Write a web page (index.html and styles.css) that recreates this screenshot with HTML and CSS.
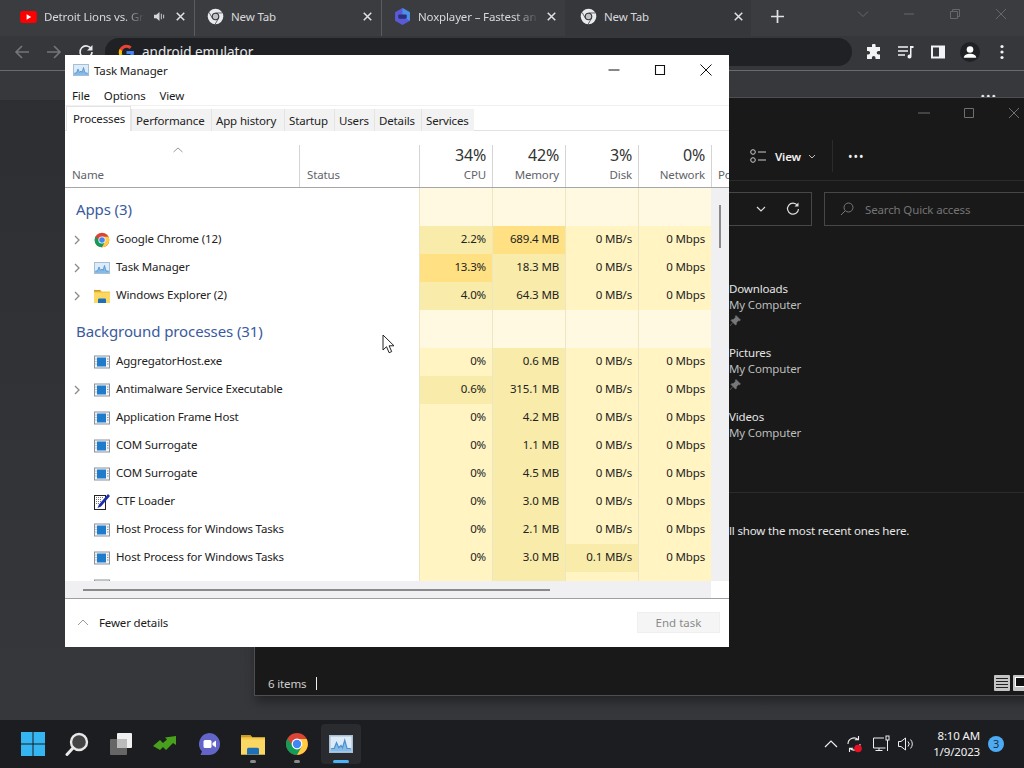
FILE: index.html
```html
<!DOCTYPE html>
<html lang="en">
<head>
    <meta charset="UTF-8">
    <title>Task Manager</title>
    <link rel="stylesheet" href="styles.css">
</head>
<body>

<svg class="sprite" width="0" height="0">
    <symbol id="i-chrome" viewBox="0 0 24 24">
        <circle cx="12" cy="12" r="11" fill="#db4437"/>
        <path d="M2.5 6.5A11 11 0 0 0 12 23l5.5-9.5H7.5z" fill="#0f9d58"/>
        <path d="M12 7h9.6A11 11 0 0 1 12 23l5-9z" fill="#ffcd40"/>
        <circle cx="12" cy="12" r="5.4" fill="#fff"/>
        <circle cx="12" cy="12" r="4.2" fill="#4285f4"/>
    </symbol>
    <symbol id="i-chrome-grey" viewBox="0 0 24 24">
        <circle cx="12" cy="12" r="11" fill="#e8eaed"/>
        <path d="M12 7h9.6M7.7 14.5 2.9 6.2M16.3 14.5 11.5 22.8" stroke="#5f6368" stroke-width="1.4"/>
        <circle cx="12" cy="12" r="5.4" fill="#35363a"/>
        <circle cx="12" cy="12" r="3.8" fill="#bdc1c6"/>
    </symbol>
    <symbol id="i-app" viewBox="0 0 16 16">
        <rect x=".5" y="2" width="15" height="12" fill="#f2f4f6" stroke="#8b949c"/>
        <rect x="3" y="3.500" width="9" height="9" fill="#1f7bcb"/>
        <path d="M13 5h1.500M13 7.500h1.500M13 10h1.500M1.500 5H2.500M1.500 7.500H2.500M1.500 10H2.500" stroke="#8b949c"/>
    </symbol>
    <symbol id="i-taskmgr" viewBox="0 0 16 16">
        <rect x=".5" y="2.500" width="15" height="11" fill="#dcebf7" stroke="#a6bfd4"/>
        <path d="M1 13v-2h2.500l1.500-4 1.500 3.500L8 9l1 1.500 1.500-5L12 11h3v2z" fill="#86bbe8"/>
        <path d="M1.500 11h2l1.500-4 1.500 3.500L8 9l1 1.500 1.500-5L12 11h2.500" fill="none" stroke="#4a8fd0" stroke-width=".8"/>
    </symbol>
    <symbol id="i-folder" viewBox="0 0 16 16">
        <path d="M0 2h6l1.500 1.500H16V15H0z" fill="#f7c948"/>
        <path d="M0 2h6l1.500 1.500H0z" fill="#c99a25"/>
        <rect x="0" y="5" width="16" height="10" fill="#fbd764"/>
        <path d="M4 15v-3.500q0-1 1-1h6q1 0 1 1V15z" fill="#1d6fb8"/>
    </symbol>
    <symbol id="i-ctf" viewBox="0 0 16 16">
        <rect x=".5" y="1.500" width="11" height="14" fill="#fff" stroke="#222"/>
        <path d="M2 3.500h8M2 5.500h6M2 7.500h5M2 9.500h3" stroke="#777" stroke-dasharray="1 1"/>
        <path d="M14 0 16 2 7 12.500 3.500 14 5 10.500z" fill="#1c2fa8"/>
    </symbol>
    <symbol id="i-chev-r" viewBox="0 0 8 10">
        <path d="M2 1l4 4-4 4" fill="none" stroke="#8a8a8a" stroke-width="1.300"/>
    </symbol>
    <symbol id="i-x" viewBox="0 0 12 12">
        <path d="M1 1l10 10M11 1 1 11" fill="none" stroke="currentColor"/>
    </symbol>
    <symbol id="i-pin" viewBox="0 0 12 12">
        <path d="M7 .5l4.500 4.500-1 .8-.8-.3L7.500 7.600 7.300 9.500 6.500 10 2 5.500l.6-.8 1.900-.2L6.600 2.300l-.3-.8zM3.800 7.600 1 11" fill="#77787a" stroke="#77787a" stroke-width=".6"/>
    </symbol>
</svg>

<!-- browser behind everything -->
<div class="chrome">
    <div class="tabstrip">
        <div class="tab tab-yt">
            <svg class="favicon" viewBox="0 0 18 13"><rect width="18" height="13" rx="3" fill="#f00"/><path d="M7 3.500 12 6.500 7 9.500z" fill="#fff"/></svg>
            <span class="tab-title fade">Detroit Lions vs. Gr</span>
            <svg class="tab-sound" viewBox="0 0 12 12"><path d="M0 4h2.500L6 1v10L2.500 8H0z" fill="#d6d7d9"/><path d="M8 3v6M10.500 4v4" stroke="#d6d7d9"/></svg>
            <svg class="tab-close"><use href="#i-x"/></svg>
        </div>
        <div class="tab">
            <svg class="favicon"><use href="#i-chrome-grey"/></svg>
            <span class="tab-title">New Tab</span>
            <svg class="tab-close"><use href="#i-x"/></svg>
        </div>
        <div class="tab">
            <svg class="favicon" viewBox="0 0 16 16"><path d="M8 0l7 4v8l-7 4-7-4V4z" fill="#5a5ad8"/><path d="M8 0l7 4v8L8 8z" fill="#4a8fe8"/><rect x="4" y="6" width="8" height="4" rx="1" fill="#2c2f7a"/></svg>
            <span class="tab-title fade">Noxplayer – Fastest an</span>
            <svg class="tab-close"><use href="#i-x"/></svg>
        </div>
        <div class="tab tab-active">
            <svg class="favicon"><use href="#i-chrome-grey"/></svg>
            <span class="tab-title">New Tab</span>
            <svg class="tab-close"><use href="#i-x"/></svg>
        </div>
        <svg class="new-tab" viewBox="0 0 12 12"><path d="M6 0v12M0 6h12" stroke="#dfe1e5" stroke-width="1.600"/></svg>
        <div class="win-btns">
            <svg class="win-btn" viewBox="0 0 12 12"><path d="M1 3.500l5 5 5-5" fill="none" stroke="currentColor"/></svg>
            <svg class="win-btn" viewBox="0 0 12 12"><path d="M1 6h10" stroke="currentColor"/></svg>
            <svg class="win-btn" viewBox="0 0 12 12"><path d="M1.500 3.500h7v7h-7zM3.500 3.500v-2h7v7h-2" fill="none" stroke="currentColor"/></svg>
            <svg class="win-btn"><use href="#i-x"/></svg>
        </div>
    </div>
    <div class="toolbar">
        <svg class="nav-icon nav-off" viewBox="0 0 16 16"><path d="M15 8H2M8 2 2 8l6 6" fill="none" stroke="currentColor" stroke-width="1.600"/></svg>
        <svg class="nav-icon nav-off" viewBox="0 0 16 16"><path d="M1 8h13M8 2l6 6-6 6" fill="none" stroke="currentColor" stroke-width="1.600"/></svg>
        <svg class="nav-icon" viewBox="0 0 16 16"><path d="M13.500 5.500A6 6 0 1 0 14 8" fill="none" stroke="currentColor" stroke-width="1.600"/><path d="M14.500 1v5.500H9z" fill="currentColor"/></svg>
        <div class="omnibox">
            <svg class="g-mark" viewBox="0 0 24 24">
                <path fill="#4285F4" d="M22.560 12.250c0-.78-.07-1.530-.2-2.250H12v4.260h5.920c-.26 1.370-1.040 2.530-2.210 3.310v2.770h3.570c2.080-1.920 3.280-4.740 3.280-8.090z"/>
                <path fill="#34A853" d="M12 23c2.970 0 5.460-.98 7.280-2.660l-3.570-2.770c-.98.66-2.230 1.060-3.710 1.060-2.860 0-5.290-1.930-6.160-4.530H2.180v2.840C3.990 20.530 7.700 23 12 23z"/>
                <path fill="#FBBC05" d="M5.840 14.090c-.22-.66-.35-1.360-.35-2.090s.13-1.430.35-2.090V7.070H2.180C1.430 8.550 1 10.220 1 12s.43 3.450 1.180 4.930l3.660-2.840z"/>
                <path fill="#EA4335" d="M12 5.380c1.620 0 3.060.56 4.210 1.640l3.150-3.150C17.450 2.090 14.970 1 12 1 7.700 1 3.990 3.470 2.180 7.070l3.660 2.840c.87-2.600 3.300-4.530 6.160-4.530z"/>
            </svg>
            <span>android emulator</span>
        </div>
        <div class="chrome-actions">
            <svg class="action" viewBox="0 0 16 16"><path d="M6 1.500a1.800 1.800 0 0 1 3.600 0V3H14v4h-1.500a1.800 1.800 0 0 0 0 3.600H14V15H9.500v-1.300a1.800 1.800 0 0 0-3.600 0V15H1v-4.500h1.300a1.800 1.800 0 0 0 0-3.600H1V3h5z" fill="#f1f3f4"/></svg>
            <svg class="action" viewBox="0 0 16 16"><path d="M0 3h10M0 7h10M0 11h7" stroke="#f1f3f4" stroke-width="1.300"/><path d="M12 2h3.500v2H13.500v8.500a2 2 0 1 1-1.500-1.900z" fill="#f1f3f4"/></svg>
            <svg class="action" viewBox="0 0 16 16"><path d="M1 1.500h14v13H1z" fill="#f1f3f4"/><rect x="3" y="3.500" width="6" height="9" fill="#35363a"/></svg>
            <svg class="action profile" viewBox="0 0 24 24"><circle cx="12" cy="12" r="12" fill="#202124"/><circle cx="12" cy="9" r="4" fill="#fff"/><path d="M4.500 19c0-3.500 4-5 7.500-5s7.500 1.500 7.500 5z" fill="#fff"/></svg>
            <svg class="action" viewBox="0 0 16 16"><circle cx="8" cy="2.500" r="1.600" fill="#f1f3f4"/><circle cx="8" cy="8" r="1.600" fill="#f1f3f4"/><circle cx="8" cy="13.500" r="1.600" fill="#f1f3f4"/></svg>
        </div>
    </div>
    <div class="page-peek">
        <span>Quality</span>
        <span class="peek-dots">•••</span>
    </div>
</div>

<!-- file explorer -->
<div class="explorer">
    <div class="ex-title">
        <svg class="ex-btn" viewBox="0 0 12 12"><path d="M0 6h12" stroke="currentColor"/></svg>
        <svg class="ex-btn" viewBox="0 0 12 12"><path d="M1.500 1.500h9v9h-9z" fill="none" stroke="currentColor"/></svg>
        <svg class="ex-btn"><use href="#i-x"/></svg>
    </div>
    <div class="ex-toolbar">
        <svg class="view-icon" viewBox="0 0 16 14"><circle cx="3" cy="3" r="2.300" fill="none" stroke="#ccc"/><circle cx="3" cy="11" r="2.300" fill="none" stroke="#ccc"/><path d="M8 3h8M8 11h8" stroke="#ccc"/></svg>
        <span class="view-label">View</span>
        <svg class="view-chev" viewBox="0 0 8 5"><path d="M1 1l3 3 3-3" fill="none" stroke="#bbb"/></svg>
        <span class="ex-sep"></span>
        <span class="ex-more">•••</span>
    </div>
    <div class="ex-address">
        <div class="addr-box">
            <svg class="addr-chev" viewBox="0 0 10 6"><path d="M1 1l4 4 4-4" fill="none" stroke="#ddd" stroke-width="1.200"/></svg>
            <svg class="addr-reload" viewBox="0 0 14 14"><path d="M11.500 3.500A5.500 5.500 0 1 0 12.500 7" fill="none" stroke="#ddd" stroke-width="1.200"/><path d="M12.500 .5v4H8.500z" fill="#ddd"/></svg>
        </div>
        <div class="search-box">
            <svg class="search-icon" viewBox="0 0 14 14"><circle cx="8.500" cy="5.500" r="4.500" fill="none" stroke="#777"/><path d="M5 9 1 13" stroke="#777"/></svg>
            <span>Search Quick access</span>
        </div>
    </div>
    <div class="ex-content">
        <div class="quick-item">
            <div class="qi-name">Downloads</div>
            <div class="qi-sub">My Computer</div>
            <svg class="qi-pin"><use href="#i-pin"/></svg>
        </div>
        <div class="quick-item">
            <div class="qi-name">Pictures</div>
            <div class="qi-sub">My Computer</div>
            <svg class="qi-pin"><use href="#i-pin"/></svg>
        </div>
        <div class="quick-item">
            <div class="qi-name">Videos</div>
            <div class="qi-sub">My Computer</div>
        </div>
    </div>
    <div class="ex-divider"></div>
    <div class="ex-note">ll show the most recent ones here.</div>
    <div class="ex-status">
        <span>6 items</span>
        <span class="ex-caret"></span>
        <span class="ex-views">
            <svg class="ex-view on" viewBox="0 0 16 16"><rect width="16" height="16" rx="1" fill="#c4c4c4"/><path d="M2 3.500h12M2 6.500h12M2 9.500h12M2 12.500h12" stroke="#222"/></svg>
            <svg class="ex-view" viewBox="0 0 16 16"><rect width="16" height="16" rx="1" fill="#c4c4c4"/><rect x="2.500" y="2.500" width="11" height="9" fill="#111" stroke="#fff"/></svg>
        </span>
    </div>
</div>

<!-- task manager, on top -->
<div class="taskmgr">
    <div class="tm-title">
        <svg class="tm-logo"><use href="#i-taskmgr"/></svg>
        <span class="tm-name">Task Manager</span>
        <div class="tm-controls">
            <svg class="tm-ctl" viewBox="0 0 12 12"><path d="M.5 6h11" stroke="#111"/></svg>
            <svg class="tm-ctl" viewBox="0 0 12 12"><path d="M1.500 1.500h9v9h-9z" fill="none" stroke="#111" stroke-width="1.100"/></svg>
            <svg class="tm-ctl" viewBox="0 0 12 12"><path d="M.5.5l11 11M11.500.5l-11 11" stroke="#111"/></svg>
        </div>
    </div>
    <div class="tm-menu">
        <span>File</span>
        <span>Options</span>
        <span>View</span>
    </div>
    <div class="tm-tabs">
        <div class="tm-tab active">Processes</div>
        <div class="tm-tab">Performance</div>
        <div class="tm-tab">App history</div>
        <div class="tm-tab">Startup</div>
        <div class="tm-tab">Users</div>
        <div class="tm-tab">Details</div>
        <div class="tm-tab">Services</div>
    </div>

    <div class="tm-head">
        <div class="col-name">
            <svg class="sort-caret" viewBox="0 0 10 6"><path d="M.5 5 5 1l4.500 4" fill="none" stroke="#999"/></svg>
            <span class="col-label">Name</span>
        </div>
        <div class="col-status"><span class="col-label">Status</span></div>
        <div class="col-stat"><span class="col-pct">34%</span><span class="col-label">CPU</span></div>
        <div class="col-stat"><span class="col-pct">42%</span><span class="col-label">Memory</span></div>
        <div class="col-stat"><span class="col-pct">3%</span><span class="col-label">Disk</span></div>
        <div class="col-stat"><span class="col-pct">0%</span><span class="col-label">Network</span></div>
        <div class="col-power"><span class="col-label">Po</span></div>
    </div>

    <div class="tm-body">
        <div class="tm-rows">
            <div class="row group">
                <div class="name"><span class="group-title">Apps (3)</span></div><div></div>
                <div class="cell h0"></div><div class="cell h0"></div><div class="cell h0"></div><div class="cell h0"></div>
            </div>
            <div class="row">
                <div class="name"><svg class="expander"><use href="#i-chev-r"/></svg><svg class="ico"><use href="#i-chrome"/></svg>Google Chrome (12)</div><div></div>
                <div class="cell h2">2.2%</div><div class="cell h3">689.4 MB</div><div class="cell h1">0 MB/s</div><div class="cell h1">0 Mbps</div>
            </div>
            <div class="row">
                <div class="name"><svg class="expander"><use href="#i-chev-r"/></svg><svg class="ico"><use href="#i-taskmgr"/></svg>Task Manager</div><div></div>
                <div class="cell h3">13.3%</div><div class="cell h2">18.3 MB</div><div class="cell h1">0 MB/s</div><div class="cell h1">0 Mbps</div>
            </div>
            <div class="row">
                <div class="name"><svg class="expander"><use href="#i-chev-r"/></svg><svg class="ico"><use href="#i-folder"/></svg>Windows Explorer (2)</div><div></div>
                <div class="cell h2">4.0%</div><div class="cell h2">64.3 MB</div><div class="cell h1">0 MB/s</div><div class="cell h1">0 Mbps</div>
            </div>
            <div class="row group">
                <div class="name"><span class="group-title">Background processes (31)</span></div><div></div>
                <div class="cell h0"></div><div class="cell h0"></div><div class="cell h0"></div><div class="cell h0"></div>
            </div>
            <div class="row">
                <div class="name"><svg class="ico"><use href="#i-app"/></svg>AggregatorHost.exe</div><div></div>
                <div class="cell h1">0%</div><div class="cell h2">0.6 MB</div><div class="cell h1">0 MB/s</div><div class="cell h1">0 Mbps</div>
            </div>
            <div class="row">
                <div class="name"><svg class="expander"><use href="#i-chev-r"/></svg><svg class="ico"><use href="#i-app"/></svg>Antimalware Service Executable</div><div></div>
                <div class="cell h2">0.6%</div><div class="cell h2">315.1 MB</div><div class="cell h1">0 MB/s</div><div class="cell h1">0 Mbps</div>
            </div>
            <div class="row">
                <div class="name"><svg class="ico"><use href="#i-app"/></svg>Application Frame Host</div><div></div>
                <div class="cell h1">0%</div><div class="cell h2">4.2 MB</div><div class="cell h1">0 MB/s</div><div class="cell h1">0 Mbps</div>
            </div>
            <div class="row">
                <div class="name"><svg class="ico"><use href="#i-app"/></svg>COM Surrogate</div><div></div>
                <div class="cell h1">0%</div><div class="cell h2">1.1 MB</div><div class="cell h1">0 MB/s</div><div class="cell h1">0 Mbps</div>
            </div>
            <div class="row">
                <div class="name"><svg class="ico"><use href="#i-app"/></svg>COM Surrogate</div><div></div>
                <div class="cell h1">0%</div><div class="cell h2">4.5 MB</div><div class="cell h1">0 MB/s</div><div class="cell h1">0 Mbps</div>
            </div>
            <div class="row">
                <div class="name"><svg class="ico"><use href="#i-ctf"/></svg>CTF Loader</div><div></div>
                <div class="cell h1">0%</div><div class="cell h2">3.0 MB</div><div class="cell h1">0 MB/s</div><div class="cell h1">0 Mbps</div>
            </div>
            <div class="row">
                <div class="name"><svg class="ico"><use href="#i-app"/></svg>Host Process for Windows Tasks</div><div></div>
                <div class="cell h1">0%</div><div class="cell h2">2.1 MB</div><div class="cell h1">0 MB/s</div><div class="cell h1">0 Mbps</div>
            </div>
            <div class="row">
                <div class="name"><svg class="ico"><use href="#i-app"/></svg>Host Process for Windows Tasks</div><div></div>
                <div class="cell h1">0%</div><div class="cell h2">3.0 MB</div><div class="cell h2">0.1 MB/s</div><div class="cell h1">0 Mbps</div>
            </div>
            <div class="row">
                <div class="name"><svg class="ico"><use href="#i-app"/></svg></div><div></div>
                <div class="cell h1"></div><div class="cell h2"></div><div class="cell h1"></div><div class="cell h1"></div>
            </div>
        </div>
        <div class="v-scroll"><span class="v-thumb"></span></div>
    </div>
    <div class="h-scroll"><span class="h-thumb"></span></div>

    <div class="tm-footer">
        <svg class="fewer-caret" viewBox="0 0 12 7"><path d="M1 6l5-5 5 5" fill="none" stroke="#999"/></svg>
        <span>Fewer details</span>
        <button class="end-task">End task</button>
    </div>
</div>

<!-- mouse pointer -->
<svg class="pointer" viewBox="0 0 13 20"><path d="M1 1v15l3.500-3.300 2.600 6 2.600-1.100-2.600-5.800H12z" fill="#fff" stroke="#222"/></svg>

<div class="taskbar">
    <div class="tb-apps">
        <div class="tb-app">
            <svg class="tb-icon" viewBox="0 0 24 24"><path d="M0 0h11.500v11.500H0zM12.500 0H24v11.500H12.500zM0 12.500h11.500V24H0zM12.500 12.500H24V24H12.500z" fill="#35b6f2"/></svg>
        </div>
        <div class="tb-app">
            <svg class="tb-icon" viewBox="0 0 24 24"><circle cx="14" cy="10" r="8" fill="#444" stroke="#e8e8e8" stroke-width="2.400"/><path d="M8 16 2 22.500" stroke="#e8e8e8" stroke-width="3" stroke-linecap="round"/></svg>
        </div>
        <div class="tb-app">
            <svg class="tb-icon" viewBox="0 0 24 24"><rect x="8" y="1" width="15" height="15" rx="1" fill="#f0f0f0"/><rect x="1" y="7" width="17" height="16" rx="1" fill="#666"/><rect x="8" y="7" width="10" height="9" fill="#bbb"/></svg>
        </div>
        <div class="tb-app">
            <svg class="tb-icon" viewBox="0 0 24 24"><path d="M0 14 7 8l3 3 4-3.500-2-2L23 4v9l-3-2-7 7-3-3-3 3z" fill="#49a01c"/></svg>
        </div>
        <div class="tb-app">
            <svg class="tb-icon" viewBox="0 0 24 24"><path d="M12 1a11 11 0 1 1 0 22H3.500l1.500-3.500A11 11 0 0 1 12 1z" fill="#6264c8"/><rect x="6.500" y="8" width="8" height="8" rx="1.500" fill="#fff"/><path d="M15.500 11 19 8.500v7L15.500 13z" fill="#fff"/></svg>
        </div>
        <div class="tb-app open">
            <svg class="tb-icon"><use href="#i-folder"/></svg>
        </div>
        <div class="tb-app open">
            <svg class="tb-icon"><use href="#i-chrome"/></svg>
        </div>
        <div class="tb-app current">
            <svg class="tb-icon"><use href="#i-taskmgr"/></svg>
        </div>
    </div>
    <div class="tray">
        <svg class="tray-chev" viewBox="0 0 14 8"><path d="M1 7l6-6 6 6" fill="none" stroke="#eee" stroke-width="1.200"/></svg>
        <svg class="tray-icon tray-sync" viewBox="0 0 18 18"><path d="M3 9a6 6 0 0 1 10-4.500M15 9a6 6 0 0 1-10 4.500M13.500 1v3.800H9.800M4.500 17v-3.800h3.700" fill="none" stroke="#eee" stroke-width="1.100"/><circle cx="13" cy="13.500" r="3.800" fill="#e81123"/></svg>
        <svg class="tray-icon" viewBox="0 0 18 18"><path d="M12 3H1.500v10h12M7 13v2.500M3.500 15.500h7" fill="none" stroke="#eee"/><rect x="14" y="1" width="3" height="4" fill="none" stroke="#eee"/><path d="M15.500 5v11" stroke="#eee"/></svg>
        <svg class="tray-icon" viewBox="0 0 18 18"><path d="M1.500 6.500H4L8.500 3v12L4 11.500H1.500z" fill="none" stroke="#eee"/><path d="M11 6.500a3.500 3.500 0 0 1 0 5M13.500 4.500a6.500 6.500 0 0 1 0 9" fill="none" stroke="#eee"/></svg>
        <div class="clock">
            <span>8:10 AM</span>
            <span>1/9/2023</span>
        </div>
        <span class="notif">3</span>
    </div>
</div>

</body>
</html>
```

FILE: styles.css
```css
* { box-sizing: border-box; }

body {
  margin: 0;
  width: 1024px;
  height: 768px;
  overflow: hidden;
  position: relative;
  background: linear-gradient(#2c2d31, #37383c);
  font-family: "Noto Sans", "Open Sans", sans-serif;
  font-size: 11.5px;
  letter-spacing: -.15px;
  color: #1a1a1a;
}

svg { display: block; flex: none; }
.sprite { position: absolute; }

/* chrome */
.chrome {
  position: absolute;
  left: 0;
  top: 0;
  width: 1024px;
  height: 100px;
  background: #37383c;
}
.tabstrip {
  display: flex;
  align-items: center;
  height: 36px;
  padding-left: 8px;
  background: #3b3c40;
  color: #d8d9db;
}
.tab {
  display: flex;
  align-items: center;
  width: 187px;
  height: 36px;
  padding: 0 9px 3px 12px;
  border-right: 1px solid #5b5c60;
}
.tab:nth-child(3) { border-right: none; width: 183px; }
.tab-active {
  width: 186px;
  padding-left: 15px;
  padding-right: 8px;
  border-right: none;
  background: #36373b;
}
.favicon { width: 17px; height: 17px; margin-right: 7px; }
.tab-yt .favicon { height: 12px; }
.tab-title {
  flex: 1;
  min-width: 0;
  overflow: hidden;
  white-space: nowrap;
}
.fade { -webkit-mask-image: linear-gradient(to right, #000 80%, transparent); mask-image: linear-gradient(to right, #000 80%, transparent); }
.tab-sound { width: 11px; height: 11px; margin: 0 3px 0 10px; }
.tab-close { width: 9px; height: 9px; color: #dfe1e5; margin-left: 8px; stroke-width: 2; }
.new-tab { width: 13px; height: 13px; margin: 0 0 3px 20px; }
.win-btns {
  display: flex;
  gap: 34px;
  margin-left: auto;
  padding: 0 17px 8px 0;
  color: #66676a;
}
.win-btn { width: 12px; height: 12px; }

.toolbar {
  display: flex;
  align-items: center;
  height: 35px;
  padding: 0 0 2px 14px;
  border-bottom: 1px solid #6a6b6e;
  background: #36373b;
}
.nav-icon { width: 16px; height: 16px; margin-right: 16px; color: #e8eaed; }
.nav-off { color: #74767a; }
.omnibox {
  display: flex;
  align-items: center;
  gap: 7px;
  width: 747px;
  height: 28px;
  margin-left: -5px;
  padding-left: 13px;
  border-radius: 14px;
  background: #202124;
  color: #e8eaed;
  font-size: 13.5px;
  letter-spacing: 0;
}
.g-mark { width: 17px; height: 17px; }
.chrome-actions {
  display: flex;
  align-items: center;
  gap: 16px;
  margin-left: 14px;
}
.action { width: 16px; height: 16px; }
.profile { width: 20px; height: 20px; margin: 0 -2px; }
.page-peek {
  display: flex;
  justify-content: space-between;
  padding: 22px 27px 0 866px;
  color: #e8eaed;
}
.peek-dots { line-height: 14px; margin-top: -3px; letter-spacing: 1px; font-size: 12px; }

/* explorer */
.explorer {
  position: absolute;
  left: 254px;
  top: 97px;
  width: 790px;
  height: 599px;
  display: flex;
  flex-direction: column;
  background: #191919;
  border: 1px solid #4d4e50;
  box-shadow: 0 8px 10px -2px rgba(0,0,0,.35);
  color: #e6e6e6;
}
.ex-title {
  display: flex;
  justify-content: flex-end;
  gap: 33px;
  height: 36px;
  padding: 9px 23px 0 0;
  color: #6f6f6f;
}
.ex-btn { width: 12px; height: 12px; }
.ex-toolbar {
  display: flex;
  align-items: center;
  height: 47px;
  padding-left: 495px;
  border-bottom: 1px solid #2b2b2b;
  padding-bottom: 2px;
}
.view-icon { width: 16px; height: 14px; }
.view-label { margin-left: 9px; font-weight: 600; color: #f0f0f0; }
.view-chev { width: 8px; height: 5px; margin-left: 7px; }
.ex-sep { width: 1px; height: 32px; margin-left: 16px; background: #2b2b2b; }
.ex-more { margin-left: 15px; font-size: 12px; letter-spacing: 1px; color: #f2f2f2; }
.ex-address {
  display: flex;
  gap: 12px;
  height: 57px;
  padding: 11px 0 0 12px;
}
.addr-box {
  display: flex;
  align-items: center;
  justify-content: flex-end;
  gap: 20px;
  width: 545px;
  height: 34px;
  padding-right: 11px;
  border: 1px solid #474747;
}
.addr-chev { width: 10px; height: 6px; }
.addr-reload { width: 14px; height: 14px; }
.search-box {
  display: flex;
  align-items: center;
  flex: 1;
  height: 34px;
  padding-left: 15px;
  border: 1px solid #474747;
  color: #747474;
  margin-right: 12px;
}
.search-icon { width: 14px; height: 14px; margin-right: 11px; }
.ex-content { padding: 43px 0 0 474px; }
.quick-item { height: 64px; line-height: 16px; }
.qi-name { color: #e4e4e4; }
.qi-sub { color: #bdbdbd; }
.qi-pin { width: 12px; height: 12px; margin-top: 2px; }
.ex-divider {
  height: 1px;
  margin: 19px 0 0 474px;
  background: #2b2b2b;
}
.ex-note {
  margin-top: 30px;
  padding-left: 474px;
  white-space: nowrap;
  line-height: 16px;
}
.ex-status {
  display: flex;
  align-items: center;
  height: 24px;
  margin-top: auto;
  padding-left: 13px;
  color: #cfcfcf;
}
.ex-caret { width: 1px; height: 13px; margin-left: 10px; background: #eee; }
.ex-views { display: flex; gap: 3px; margin-left: auto; padding-right: 14px; }
.ex-view { width: 16px; height: 16px; }

/* task manager */
.taskmgr {
  position: absolute;
  left: 65px;
  top: 55px;
  width: 664px;
  height: 592px;
  display: flex;
  flex-direction: column;
  background: #fff;
}
.tm-title {
  display: flex;
  align-items: center;
  height: 30px;
  padding-left: 8px;
}
.tm-logo { width: 16px; height: 16px; }
.tm-name { margin-left: 5px; color: #222; }
.tm-controls {
  display: flex;
  gap: 34px;
  margin-left: auto;
  padding-right: 17px;
}
.tm-ctl { width: 12px; height: 12px; }
.tm-menu {
  display: flex;
  gap: 14px;
  height: 21px;
  padding: 2px 0 0 7px;
  border-bottom: 1px solid #f0f0f0;
  line-height: 18px;
}
.tm-tabs {
  display: grid;
  grid-template-columns: 65px 80px 73px 50px 40px 47px 53px;
  height: 25px;
  padding-left: 1px;
  border-bottom: 1px solid #e2e2e2;
  align-items: end;
}
.tm-tab {
  height: 22px;
  padding-left: 4px;
  line-height: 23px;
  background: #f2f2f2;
  border-left: 1px solid #e4e4e4;
  white-space: nowrap;
  color: #222;
}
.tm-tab.active {
  height: 25px;
  padding-left: 6px;
  line-height: 24px;
  background: #fff;
  border: 1px solid #e4e4e4;
  border-width: 1px 1px 0;
}

.tm-head {
  display: grid;
  grid-template-columns: 234px 120px repeat(4, 73px) 1fr;
  grid-template-rows: 56px;
  height: 57px;
  border-bottom: 1px solid #a6a6a6;
  overflow: hidden;
  color: #5f6368;
}
.tm-head > div {
  display: flex;
  flex-direction: column;
  justify-content: flex-end;
  padding-bottom: 4px;
}
.col-name { position: relative; padding-left: 7px; }
.sort-caret {
  position: absolute;
  left: 108px;
  top: 16px;
  width: 10px;
  height: 6px;
}
.col-label { line-height: 16px; white-space: nowrap; }
.col-status, .col-stat, .col-power {
  border-left: 1px solid #d4d4d4;
  margin-top: 14px;
}
.col-status { padding-left: 7px; }
.col-stat { align-items: flex-end; padding-right: 6px; }
.col-power { padding-left: 6px; overflow: hidden; }
.col-pct { font-size: 16px; letter-spacing: -.2px; line-height: 20px; color: #333; margin-bottom: 2px; }

.tm-body {
  display: flex;
  height: 393px;
  overflow: hidden;
}
.tm-rows { width: 646px; }
.row {
  display: grid;
  grid-template-columns: 234px 120px repeat(4, 73px);
  height: 28px;
}
.row.group { height: 38px; }
.name {
  display: flex;
  align-items: center;
  padding-left: 51px;
  position: relative;
  white-space: nowrap;
  color: #222;
  padding-bottom: 3px;
}
.group .name { padding: 3px 0 0 11px; }
.group-title { font-size: 15px; letter-spacing: -.1px; color: #3a5a9e; }
.expander {
  position: absolute;
  left: 8px;
  top: 9px;
  width: 8px;
  height: 10px;
}
.ico {
  width: 16px;
  height: 16px;
  margin: 2px 6px 0 -22px;
}
.cell {
  padding-right: 6px;
  border-left: 1px solid #ede6c2;
  text-align: right;
  line-height: 26px;
  color: #222;
}
.h0 { background: #fff9e1; }
.h1 { background: #fff4c2; }
.h2 { background: #f9ecaa; }
.h3 { background: #ffe183; }

.v-scroll {
  flex: 1;
  background: #f0f0f3;
  padding: 17px 0 0 8px;
}
.v-thumb { display: block; width: 2px; height: 43px; background: #8a8a8a; }
.h-scroll {
  height: 18px;
  padding: 8px 0 0 18px;
  border-bottom: 1px solid #a0a0a0;
  background: linear-gradient(to right, #f0f0f3 646px, #fff 646px);
}
.h-thumb { display: block; width: 467px; height: 2px; background: #8a8a8a; }
.tm-footer {
  display: flex;
  align-items: center;
  height: 48px;
  padding: 0 9px 2px 12px;
}
.fewer-caret { width: 12px; height: 7px; margin-right: 10px; }
.end-task {
  width: 83px;
  height: 21px;
  margin-left: auto;
  padding: 0;
  border: 1px solid #efefef;
  background: #f5f5f5;
  color: #8a8a8a;
  font: inherit;
}

.pointer {
  position: absolute;
  left: 382px;
  top: 334px;
  width: 13px;
  height: 20px;
}

/* windows taskbar */
.taskbar {
  position: absolute;
  left: 0;
  bottom: 0;
  width: 1024px;
  height: 48px;
  display: flex;
  align-items: center;
  background: #1c1d20;
  color: #f2f2f2;
}
.tb-apps { display: flex; padding-left: 11px; }
.tb-app {
  position: relative;
  display: flex;
  align-items: center;
  justify-content: center;
  width: 44px;
  height: 40px;
}
.tb-icon { width: 24px; height: 24px; }
.tb-app.open::after, .tb-app.current::after {
  content: "";
  position: absolute;
  bottom: 1px;
  left: 19px;
  width: 6px;
  height: 3px;
  border-radius: 2px;
  background: #8a8a8a;
}
.tb-app.current { background: #2a2b2e; border-radius: 4px; width: 40px; margin-left: 2px; }
.tb-app.current::after { left: 12px; width: 16px; background: #4cb2f5; }
.tray {
  display: flex;
  align-items: center;
  margin-left: auto;
  padding-right: 20px;
}
.tray-chev { width: 14px; height: 8px; margin-right: 7px; }
.tray-icon { width: 18px; height: 18px; margin-right: 7px; }
.tray-sync { margin-right: 9px; }
.clock {
  display: flex;
  flex-direction: column;
  align-items: flex-end;
  margin: 0 8px 0 11px;
  line-height: 16px;
}
.notif {
  width: 16px;
  height: 16px;
  border-radius: 50%;
  background: #4cabf2;
  color: #16324a;
  text-align: center;
  font-size: 11px;
  line-height: 16px;
}
```
